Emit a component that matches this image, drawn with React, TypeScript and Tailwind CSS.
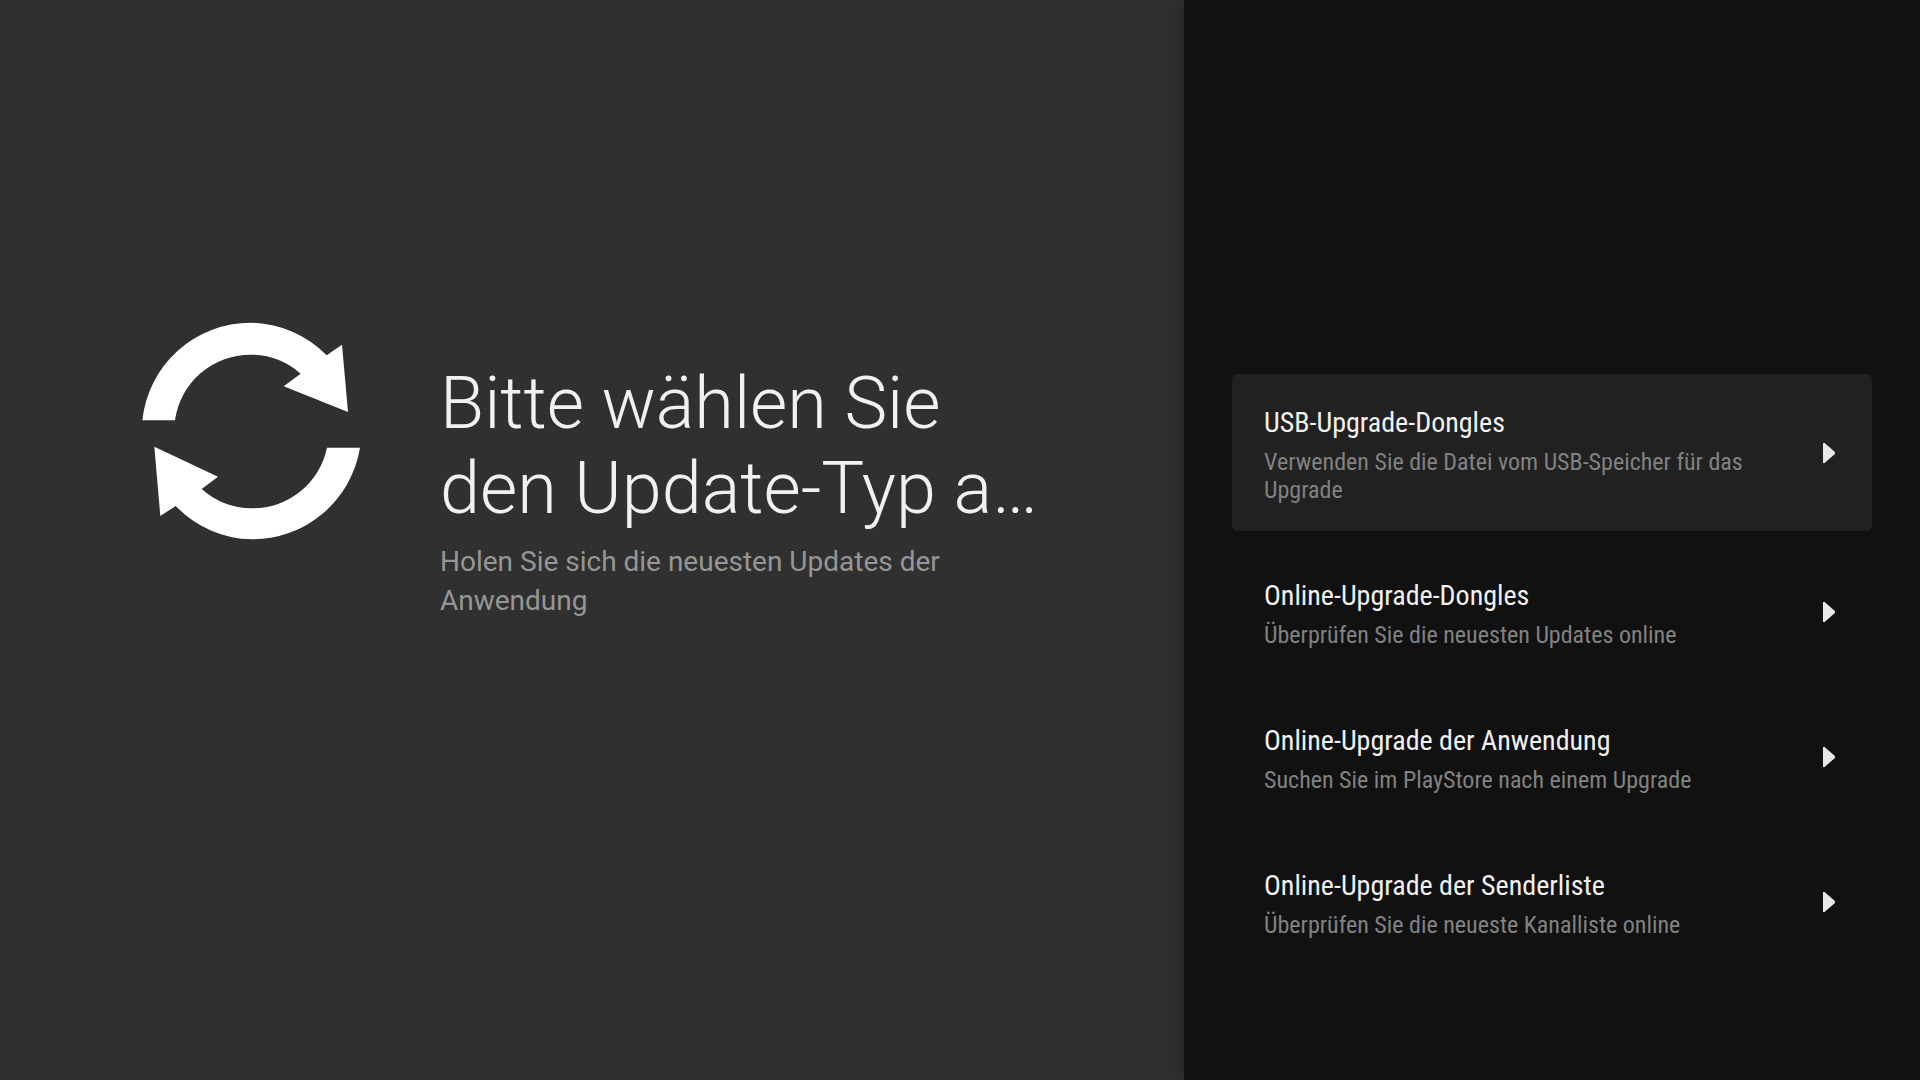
import { useState } from "react";
import clsx from "clsx";

const updateTypes = [
  {
    id: "usb-dongle",
    title: "USB-Upgrade-Dongles",
    description: "Verwenden Sie die Datei vom USB-Speicher für das Upgrade",
  },
  {
    id: "online-dongle",
    title: "Online-Upgrade-Dongles",
    description: "Überprüfen Sie die neuesten Updates online",
  },
  {
    id: "online-app",
    title: "Online-Upgrade der Anwendung",
    description: "Suchen Sie im PlayStore nach einem Upgrade",
  },
  {
    id: "online-channels",
    title: "Online-Upgrade der Senderliste",
    description: "Überprüfen Sie die neueste Kanalliste online",
  },
];

const RefreshIcon = () => (
  <svg
    className="size-[218px] shrink-0 text-white"
    viewBox="36 36 654 654"
    fill="currentColor"
    aria-hidden="true"
  >
    <path d="M37 331A327 327 0 0 1 362 38A327 327 0 0 1 590 136L636 104L654 306L461 229L512 191A228 228 0 0 0 362 134A228 228 0 0 0 135 331Z" />
    <path d="M690 413A327 327 0 0 1 365 688A327 327 0 0 1 137 588L91 618L73 410L264 500L215 537A228 228 0 0 0 365 595A228 228 0 0 0 591 413Z" />
  </svg>
);

const ArrowIcon = () => (
  <svg
    className="h-5 w-3 shrink-0 text-[#e8e8e8]"
    viewBox="0 0 12 20"
    fill="currentColor"
    aria-hidden="true"
  >
    <path d="M0 0H1.6L11.6 8.8Q12.6 10 11.6 11.2L1.6 20H0Z" />
  </svg>
);

const App = () => {
  const [selected, setSelected] = useState("usb-dongle");

  return (
    <div className="flex min-h-screen bg-[#303030] font-['Roboto',sans-serif]">
      <main className="flex flex-1 items-start gap-20 pt-[322px] pr-32 pl-[142px]">
        <RefreshIcon />
        <div className="flex-1 pt-[39px]">
          <h1 className="text-[72px] leading-[85px] font-light text-[#f1f1f1]">
            Bitte wählen Sie
            <br />
            den Update-Typ a…
          </h1>
          <p className="mt-[11px] text-[28px] leading-[39px] text-[#969696]">
            Holen Sie sich die neuesten Updates der Anwendung
          </p>
        </div>
      </main>
      <aside className="flex w-[38.333%] flex-col gap-4 bg-[#111111] px-12 pt-[374px] font-['Roboto_Condensed','Roboto',sans-serif] shadow-[0_0_20px_rgba(0,0,0,0.3)]">
        {updateTypes.map((item) => (
          <button
            key={item.id}
            type="button"
            onClick={() => setSelected(item.id)}
            className={clsx(
              "flex items-center gap-12 rounded-md py-[27px] pr-[37px] pl-8 text-left outline-none",
              selected === item.id && "bg-[#212121]"
            )}
          >
            <span className="flex flex-1 flex-col gap-[9px] pt-[5px]">
              <span className="text-[28px] leading-[33px] text-[#f1f1f1]">
                {item.title}
              </span>
              <span className="text-2xl leading-7 text-[#828282]">
                {item.description}
              </span>
            </span>
            <ArrowIcon />
          </button>
        ))}
      </aside>
    </div>
  );
};

export default App;
